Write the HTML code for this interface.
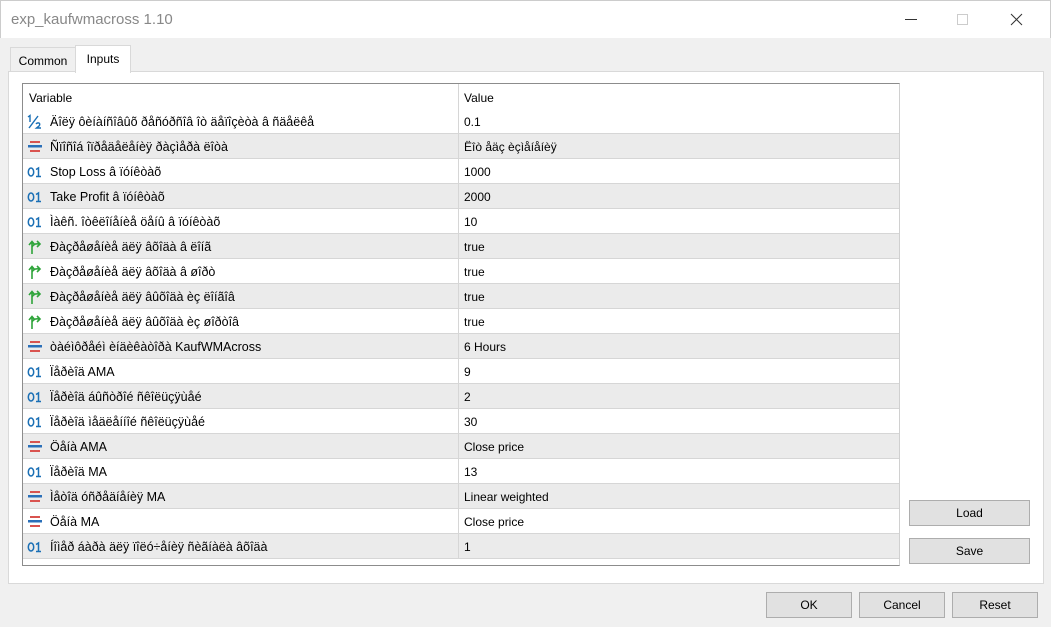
<!DOCTYPE html>
<html><head><meta charset="utf-8"><style>
*{margin:0;padding:0;box-sizing:border-box}
body{width:1051px;height:627px;background:#f0f0f0;font-family:"Segoe UI","Liberation Sans","DejaVu Sans",sans-serif;font-size:12px;color:#000;position:relative;overflow:hidden}
.title{position:absolute;left:0;top:0;width:1051px;height:38px;background:#fff;border:1px solid #ccc;border-bottom:none}
.title span{position:absolute;left:10px;top:10px;font-size:15px;color:#888}
.abs{position:absolute}
.tab{position:absolute;border:1px solid #d9d9d9;border-bottom:none;padding-top:5px;text-align:center;font-size:12px}
.panel{position:absolute;left:8px;top:71px;width:1036px;height:513px;background:#fff;border:1px solid #d9d9d9}
.table{position:absolute;left:22px;top:83px;width:878px;height:483px;border:1px solid #8c8c8c;border-right-color:#d0d0d0;background:#fff}
.row{position:absolute;left:0;width:876px;height:25px;border-bottom:1px solid #d6d6d6}
.row.s{background:#ebebeb}
.row .n{position:absolute;left:27px;top:6px;white-space:nowrap;font-size:12.5px}
.row .v{position:absolute;left:441px;top:6px}
.row .d{position:absolute;left:435px;top:0;width:1px;height:25px;background:#d6d6d6}
.ic{position:absolute;left:4px;top:5px;width:15px;height:15px}
.btn{position:absolute;background:#e1e1e1;border:1px solid #adadad;text-align:center;line-height:25px;font-size:12px}
</style></head><body>
<div class="title"><span>exp_kaufwmacross 1.10</span>
<svg class="abs" style="left:896px;top:10px" width="140" height="20"><line x1="8" y1="8.5" x2="20" y2="8.5" stroke="#333"/><rect x="60.5" y="3.5" width="10" height="10" fill="none" stroke="#ccc"/><path d="M114 3 L125 14 M125 3 L114 14" stroke="#333"/></svg></div>
<div class="tab" style="left:10px;top:47px;width:66px;height:25px;background:#f0f0f0;padding-top:6px">Common</div>
<div class="panel"></div>
<div class="tab" style="left:75px;top:45px;width:56px;height:28px;background:#fff;padding-top:6px;z-index:2">Inputs</div>
<div class="table">
<div class="row" style="top:0;border-bottom:none"><span class="n" style="left:6px;top:7px;font-size:12px">Variable</span><span class="v" style="top:7px">Value</span><div class="d"></div></div>
</div>
<div class="btn" style="left:909px;top:500px;width:121px;height:26px">Load</div>
<div class="btn" style="left:909px;top:538px;width:121px;height:26px">Save</div>
<div class="btn" style="left:766px;top:592px;width:86px;height:26px">OK</div>
<div class="btn" style="left:859px;top:592px;width:86px;height:26px">Cancel</div>
<div class="btn" style="left:952px;top:592px;width:86px;height:26px">Reset</div>
<script>
const H='<svg class="ic" viewBox="0 0 15 15" fill="none" stroke="#1a6fb5" stroke-width="1.4"><path d="M1 3 L3 1.5 V8"/><path d="M2 14 L11 2"/><path d="M9 10 Q10 8.5 12 9 Q13.5 10 12 12 L9.5 14 H14"/></svg>';
const E='<svg class="ic" viewBox="0 0 15 15"><rect x="3" y="2" width="10" height="2" fill="#d9534f"/><rect x="1" y="6" width="14" height="2.5" fill="#2a6fb8"/><rect x="3" y="11" width="10" height="2" fill="#d9534f"/></svg>';
const I='<svg class="ic" viewBox="0 0 15 15" fill="none" stroke="#1a6fb5" stroke-width="1.5"><ellipse cx="4" cy="8" rx="2.7" ry="4"/><path d="M9 5.5 L11.5 4 V12.5 M9 12.5 H14"/></svg>';
const B='<svg class="ic" viewBox="0 0 15 15" fill="none" stroke="#2ea43a" stroke-width="1.6"><path d="M5 15 V3 M2 6 L5 2.5 L8 6 M5 8 Q7 4 12 5 M10 2 L13 5 L10 8"/></svg>';
const rows=[[H,"Äîëÿ ôèíàíñîâûõ ðåñóðñîâ îò äåïîçèòà â ñäåëêå","0.1"],[E,"Ñïîñîá îïðåäåëåíèÿ ðàçìåðà ëîòà","Ëîò åäç èçìåíåíèÿ"],[I,"Stop Loss â ïóíêòàõ","1000"],[I,"Take Profit â ïóíêòàõ","2000"],[I,"Ìàêñ. îòêëîíåíèå öåíû â ïóíêòàõ","10"],[B,"Ðàçðåøåíèå äëÿ âõîäà â ëîíã","true"],[B,"Ðàçðåøåíèå äëÿ âõîäà â øîðò","true"],[B,"Ðàçðåøåíèå äëÿ âûõîäà èç ëîíãîâ","true"],[B,"Ðàçðåøåíèå äëÿ âûõîäà èç øîðòîâ","true"],[E,"òàéìôðåéì èíäèêàòîðà KaufWMAcross","6 Hours"],[I,"Ïåðèîä AMA","9"],[I,"Ïåðèîä áûñòðîé ñêîëüçÿùåé","2"],[I,"Ïåðèîä ìåäëåííîé ñêîëüçÿùåé","30"],[E,"Öåíà AMA","Close price"],[I,"Ïåðèîä MA","13"],[E,"Ìåòîä óñðåäíåíèÿ MA","Linear weighted"],[E,"Öåíà MA","Close price"],[I,"Íîìåð áàðà äëÿ ïîëó÷åíèÿ ñèãíàëà âõîäà","1"]];
let h='';rows.forEach((r,i)=>{h+=`<div class="row${i%2?' s':''}" style="top:${25+i*25}px">${r[0]}<span class="n">${r[1]}</span><div class="d"></div><span class="v">${r[2]}</span></div>`});
document.querySelector('.table').insertAdjacentHTML('beforeend',h);
</script>
</body></html>
